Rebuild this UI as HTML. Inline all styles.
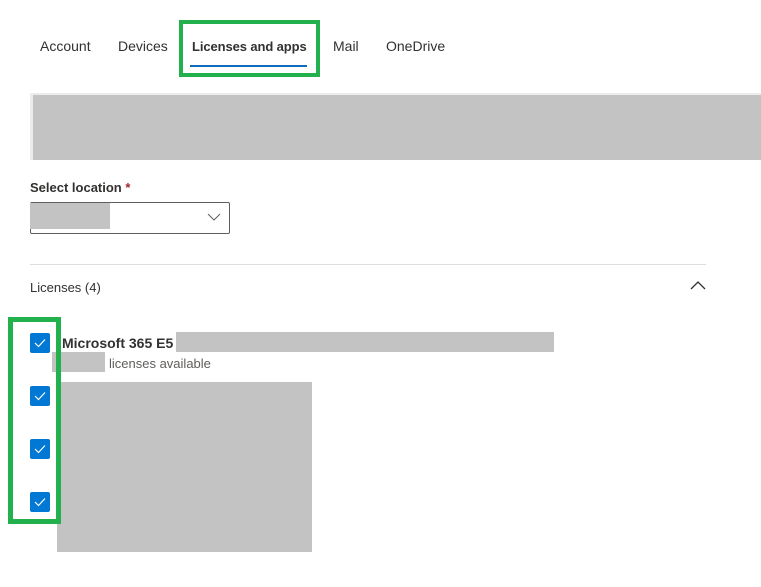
<!DOCTYPE html>
<html><head><meta charset="utf-8"><style>
body{margin:0;width:761px;height:587px;background:#fff;position:relative;overflow:hidden;font-family:"Segoe UI","Liberation Sans",sans-serif;color:#323130}
.a{position:absolute}
.tab{position:absolute;top:38px;font-size:14px;color:#323130}
.g{background:#c3c3c3;position:absolute}
.cb{position:absolute;left:30px;width:20px;height:20px;background:#0078d4;border-radius:2px}
.cb svg{position:absolute;left:4px;top:5px}
</style></head><body>
<div class="tab" style="left:40px">Account</div>
<div class="tab" style="left:118px">Devices</div>
<div class="tab" style="left:192px;font-weight:bold;font-size:13px;top:39px;letter-spacing:-0.1px">Licenses and apps</div>
<div class="tab" style="left:333px">Mail</div>
<div class="tab" style="left:386px">OneDrive</div>
<div class="a" style="left:190px;top:65px;width:117px;height:2px;background:#0f6cbd"></div>
<div class="a" style="left:179px;top:20px;width:133px;height:49px;border:4px solid #22b14c"></div>

<div class="a" style="left:30px;top:93px;width:731px;height:67px;background:#ececec"></div>
<div class="g" style="left:33px;top:95px;width:728px;height:65px"></div>

<div class="a" style="left:30px;top:180px;font-size:13px;font-weight:600">Select location <span style="color:#a4262c">*</span></div>
<div class="a" style="left:30px;top:202px;width:198px;height:30px;border:1px solid #605e5c;border-radius:2px"></div>
<div class="g" style="left:30px;top:203px;width:80px;height:26px"></div>
<svg class="a" style="left:207px;top:213px" width="14" height="8"><path d="M1 1 L7 7 L13 1" stroke="#605e5c" fill="none" stroke-width="1"/></svg>

<div class="a" style="left:30px;top:264px;width:676px;height:1px;background:#e1dfdd"></div>
<div class="a" style="left:30px;top:280px;font-size:13px">Licenses (4)</div>
<svg class="a" style="left:690px;top:281px" width="16" height="9"><path d="M1 8 L8 1 L15 8" stroke="#323130" fill="none" stroke-width="1.3"/></svg>

<div class="a" style="left:62px;top:335px;font-size:14px;font-weight:bold">Microsoft 365 E5</div>
<div class="g" style="left:176px;top:332px;width:378px;height:20px"></div>
<div class="g" style="left:52px;top:352px;width:53px;height:20px"></div>
<div class="a" style="left:109px;top:356px;font-size:13px;color:#605e5c">licenses available</div>
<div class="g" style="left:57px;top:382px;width:255px;height:170px"></div>

<div class="cb" style="top:333px"><svg width="12" height="10"><path d="M1 5 L4.5 8.5 L11 1.5" stroke="#fff" fill="none" stroke-width="1.2"/></svg></div>
<div class="cb" style="top:386px"><svg width="12" height="10"><path d="M1 5 L4.5 8.5 L11 1.5" stroke="#fff" fill="none" stroke-width="1.2"/></svg></div>
<div class="cb" style="top:439px"><svg width="12" height="10"><path d="M1 5 L4.5 8.5 L11 1.5" stroke="#fff" fill="none" stroke-width="1.2"/></svg></div>
<div class="cb" style="top:492px"><svg width="12" height="10"><path d="M1 5 L4.5 8.5 L11 1.5" stroke="#fff" fill="none" stroke-width="1.2"/></svg></div>
<div class="a" style="left:8px;top:317px;width:43px;height:197px;border:5px solid #22b14c"></div>
</body></html>
